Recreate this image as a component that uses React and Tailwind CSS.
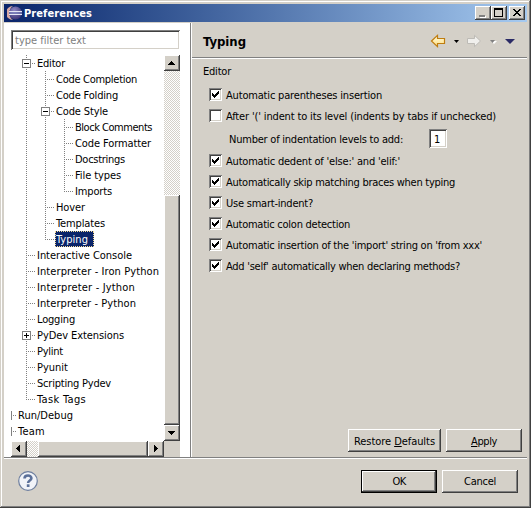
import { useLayoutEffect, useRef, useState } from "react";

// Label whose tracking is computed so that it fills the given width.
function Fit({ w, children, className = "" }) {
  const ref = useRef(null);
  const [sp, setSp] = useState(0);
  useLayoutEffect(() => {
    const el = ref.current;
    const n = el.textContent.length;
    setSp((w - el.getBoundingClientRect().width) / n);
  }, [w]);
  return (
    <span ref={ref} className={`inline-block shrink-0 whitespace-pre pt-0.5 ${className}`} style={{ letterSpacing: `${sp}px` }}>
      {children}
    </span>
  );
}

const raised =
  "bg-[#d4d0c8] shadow-[inset_-1px_-1px_0_#404040,inset_1px_1px_0_#fff,inset_-2px_-2px_0_#808080]";
const sunken =
  "bg-white shadow-[inset_1px_1px_0_#808080,inset_-1px_-1px_0_#fff,inset_2px_2px_0_#404040,inset_-2px_-2px_0_#d4d0c8]";
const dither =
  "bg-[repeating-conic-gradient(#d4d0c8_0_25%,#fff_0_50%)] bg-[length:2px_2px]";

const ROWS = [
  ["Editor", 28, "-"],
  ["Code Completion", 81, "|t"],
  ["Code Folding", 62, "|t"],
  ["Code Style", 52, "|-"],
  ["Block Comments", 77, "||t"],
  ["Code Formatter", 76, "||t"],
  ["Docstrings", 50, "||t"],
  ["File types", 46, "||t"],
  ["Imports", 37, "||l"],
  ["Hover", 29, "|t"],
  ["Templates", 49, "|t"],
  ["Typing", 32, "|l"],
  ["Interactive Console", 95, "t"],
  ["Interpreter - Iron Python", 122, "t"],
  ["Interpreter - Jython", 98, "t"],
  ["Interpreter - Python", 99, "t"],
  ["Logging", 38, "t"],
  ["PyDev Extensions", 87, "+"],
  ["Pylint", 26, "t"],
  ["Pyunit", 31, "t"],
  ["Scripting Pydev", 74, "t"],
  ["Task Tags", 49, "l"],
  ["Run/Debug", 55, "r"],
  ["Team", 27, "r"],
];

function Guide({ kind }) {
  if (kind === "r")
    return (
      <svg width="6" height="16" shapeRendering="crispEdges" className="shrink-0" fill="#808080">
        <path d="M0 4h1v9h-1zM2 8h1v1h-1zM4 8h1v1h-1z" />
      </svg>
    );
  const box = kind === "-" || kind === "+";
  return (
    <svg width="19" height="16" shapeRendering="crispEdges" className="shrink-0" fill="none">
      <path d={kind === "l" ? "M9.5 0V9" : "M9.5 0V16"} stroke="#808080" strokeDasharray="1 1" />
      {kind !== "|" && <path d="M9 8.5H18" stroke="#808080" strokeDasharray="1 1" />}
      {box && <rect x="5.5" y="4.5" width="8" height="8" fill="#fff" stroke="#808080" />}
      {box && <path d="M7 8.5H12" stroke="#000" />}
      {kind === "+" && <path d="M9.5 6V11" stroke="#000" />}
    </svg>
  );
}

function Row({ label, w, guides }) {
  const sel = label === "Typing";
  return (
    <div className="flex h-4 items-center">
      {guides !== "r" && <span className="w-1.5 shrink-0" />}
      {guides.split("").map((g, i) => (
        <Guide key={i} kind={g} />
      ))}
      <div
        className={`flex h-4 items-center ${
          sel ? "w-[39px] border border-dotted border-[#f5db95] bg-[#0a246a] text-white" : "pl-px"
        }`}
      >
        <Fit w={w}>{label}</Fit>
      </div>
    </div>
  );
}

function Arrow({ d, className }) {
  return (
    <div className={`flex shrink-0 ${raised} ${className}`}>
      <svg width="16" height="16" shapeRendering="crispEdges">
        <path d={d} fill="#000" />
      </svg>
    </div>
  );
}

function Box({ checked }) {
  return (
    <span className={`h-[13px] w-[13px] shrink-0 ${sunken}`}>
      {checked && (
        <svg width="13" height="13" shapeRendering="crispEdges">
          <path d="M3 5h1v3h-1zM4 6h1v3h-1zM5 7h1v3h-1zM6 6h1v3h-1zM7 5h1v3h-1zM8 4h1v3h-1zM9 3h1v3h-1z" />
        </svg>
      )}
    </span>
  );
}

function Check({ label, w, checked = true }) {
  return (
    <div className="flex h-[21px] items-center gap-1 pl-[17px]">
      <Box checked={checked} />
      <Fit w={w}>{label}</Fit>
    </div>
  );
}

function Button({ children, w, className }) {
  return (
    <div className={`flex h-[23px] items-center justify-center ${className}`}>
      <Fit w={w}>{children}</Fit>
    </div>
  );
}

function TitleBar() {
  return (
    <div className="flex h-[18px] items-center bg-gradient-to-r from-[#0a246a] to-[#a6caf0] pl-[3px] pr-0.5">
      <svg width="16" height="16" viewBox="0 0 16 16">
        <defs>
          <radialGradient id="ecl" cx="0.4" cy="0.3" r="0.8">
            <stop offset="0" stopColor="#8f88c4" />
            <stop offset="1" stopColor="#332b6e" />
          </radialGradient>
        </defs>
        <path d="M6 1A7 7 0 0 0 6 15A8.500 8.500 0 0 1 6 1z" fill="#d9a9a4" />
        <circle cx="8.500" cy="8" r="6.500" fill="url(#ecl)" />
        <path d="M2 6.500h13M2 9.500h13" stroke="#e4e6f5" />
        <path d="M2 8h13" stroke="#7e8cc4" />
      </svg>
      <Fit w={68} className="ml-[1px] font-bold text-white">Preferences</Fit>
      <div className="ml-auto flex">
        <div className={`h-3.5 w-4 ${raised}`}>
          <svg width="16" height="14" shapeRendering="crispEdges">
            <path d="M5 10h6v2H5z" fill="#fff" />
            <path d="M4 9h6v2H4z" fill="#808080" />
          </svg>
        </div>
        <div className={`h-3.5 w-4 ${raised}`}>
          <svg width="16" height="14" shapeRendering="crispEdges">
            <path fillRule="evenodd" d="M3 2h9v9H3zM4 4v6h7V4z" />
          </svg>
        </div>
        <div className={`ml-0.5 h-3.5 w-4 ${raised}`}>
          <svg width="16" height="14" shapeRendering="crispEdges">
            <path d="M4 3h2v1h1v1h2V4h1V3h2v1h-1v1h-1v1H9v1h1v1h1v1h1v1h-2V9H9V8H7v1H6v1H4V9h1V8h1V7h1V6H6V5H5V4H4z" />
          </svg>
        </div>
      </div>
    </div>
  );
}

export default function App() {
  return (
    <div className="h-[508px] w-[531px] overflow-hidden bg-[#d4d0c8] p-1 pb-0 text-[11px] leading-[14px] text-black [font-family:'DejaVu_Sans_Condensed','DejaVu_Sans',sans-serif] shadow-[inset_-1px_-1px_0_#404040,inset_1px_1px_0_#d4d0c8,inset_-2px_-2px_0_#808080,inset_2px_2px_0_#fff]">
      <TitleBar />
      <div className="mt-px flex h-[434px] w-[523px]">
        <div className="w-[186px] shrink-0 bg-white pl-[7px] pt-[7px]">
          <div className={`flex h-5 w-[169px] items-center pl-1 text-[#808080] ${sunken}`}>
            <Fit w={71}>type filter text</Fit>
          </div>
          <div className="mt-[5px] flex h-[386px]">
            <div className="w-[153px] overflow-hidden">
              {ROWS.map(([label, w, g]) => (
                <Row key={label} label={label} w={w} guides={g} />
              ))}
            </div>
            <div className={`flex w-4 flex-col ${dither}`}>
              <Arrow className="h-4" d="M7 6h1v1h1v1h1v1h1v1H4V9h1V8h1V7h1z" />
              <div className="h-[124px]" />
              <div className={`h-[230px] ${raised}`} />
              <Arrow className="h-4" d="M4 6h7v1h-1v1H9v1H8v1H7V9H6V8H5V7H4z" />
            </div>
          </div>
          <div className="flex h-4 w-[169px] bg-[#d4d0c8]">
            <div className={`flex w-[153px] ${dither}`}>
              <Arrow className="w-4" d="M9 4v7H8v-1H7V9H6V8H5V7h1V6h1V5h1V4z" />
              <div className="w-[11px]" />
              <div className={`w-[110px] ${raised}`} />
              <Arrow className="w-4" d="M6 4h1v1h1v1h1v1h1v1H9v1H8v1H7v1H6z" />
            </div>
          </div>
        </div>
        <div className="w-0.5 shrink-0 border-l border-r border-l-[#808080] border-r-white" />
        <div className="flex w-[335px] flex-col">
          <div className="flex h-9 shrink-0 items-center border-b border-white pl-[11px] shadow-[inset_0_-1px_0_#808080]">
            <Fit w={43} className="text-[13px] font-bold">Typing</Fit>
            <svg width="92" height="16" className="ml-auto mr-[5px]" viewBox="0 0 92 16">
              <defs>
                <linearGradient id="gold" x1="0" y1="0" x2="0" y2="1">
                  <stop offset="0" stopColor="#fffbe0" />
                  <stop offset="1" stopColor="#ffdf80" />
                </linearGradient>
              </defs>
              <path d="M1.500 8L7.500 2.300V5.500H14.500V10.500H7.500V13.700Z" fill="url(#gold)" stroke="#bf7d10" strokeWidth="1.200" />
              <path d="M24 7h5l-2.500 3z" fill="#000" />
              <path d="M50.500 8L44.500 2.300V5.500H37.500V10.500H44.500V13.700Z" fill="#f0efec" stroke="#bdbbb6" />
              <path d="M61 8h6l-3 3z" fill="#fff" />
              <path d="M60 7h5l-2.500 3z" fill="#808080" />
              <path d="M75 6h10l-5 5z" fill="#2b2b66" />
            </svg>
          </div>
          <div className="flex h-6 shrink-0 items-center pl-[11px]">
            <Fit w={28}>Editor</Fit>
          </div>
          <div className="mt-px">
            <Check label="Automatic parentheses insertion" w={156} />
            <Check label="After '(' indent to its level (indents by tabs if unchecked)" w={270} checked={false} />
          </div>
          <div className="flex h-6 items-center pl-[37px] pt-px">
            <Fit w={174}>Number of indentation levels to add:</Fit>
            <div className={`ml-[26px] flex h-[19px] w-[18px] items-center pl-[5px] ${sunken}`}>
              <span className="pt-0.5">1</span>
            </div>
          </div>
          <Check label="Automatic dedent of 'else:' and 'elif:'" w={174} />
          <Check label="Automatically skip matching braces when typing" w={229} />
          <Check label="Use smart-indent?" w={87} />
          <Check label="Automatic colon detection" w={124} />
          <Check label="Automatic insertion of the 'import' string on 'from xxx'" w={256} />
          <Check label="Add 'self' automatically when declaring methods?" w={234} />
          <div className="mt-auto flex justify-end gap-[5px] pb-[5px] pr-[5px]">
            <Button w={81} className={`w-[93px] ${raised}`}>
              Restore <u>D</u>efaults
            </Button>
            <Button w={26} className={`w-[76px] ${raised}`}>
              <u>A</u>pply
            </Button>
          </div>
        </div>
      </div>
      <div className="flex h-[47px] w-[523px] items-center border-t border-[#808080] pl-3.5 pr-[9px] shadow-[inset_0_1px_0_#fff]">
        <svg width="20" height="20" viewBox="0 0 20 20">
          <circle cx="10" cy="10" r="9.300" fill="#f1f3f8" stroke="#6e7f9f" strokeWidth="1.200" />
          <path d="M6.500 7.600C6.500 3.500 13.600 3.700 13.400 7.300C13.300 9.600 10.100 9.500 10.100 12" fill="none" stroke="#5b7099" strokeWidth="2.600" />
          <rect x="8.800" y="13.300" width="2.700" height="2.700" fill="#5b7099" />
        </svg>
        <div className="ml-auto flex gap-[5px]">
          <Button w={13} className="w-[76px] border border-black bg-[#d4d0c8] shadow-[inset_-1px_-1px_0_#404040,inset_1px_1px_0_#fff,inset_-2px_-2px_0_#808080]">
            OK
          </Button>
          <Button w={32} className={`w-[76px] ${raised}`}>
            Cancel
          </Button>
        </div>
      </div>
    </div>
  );
}
